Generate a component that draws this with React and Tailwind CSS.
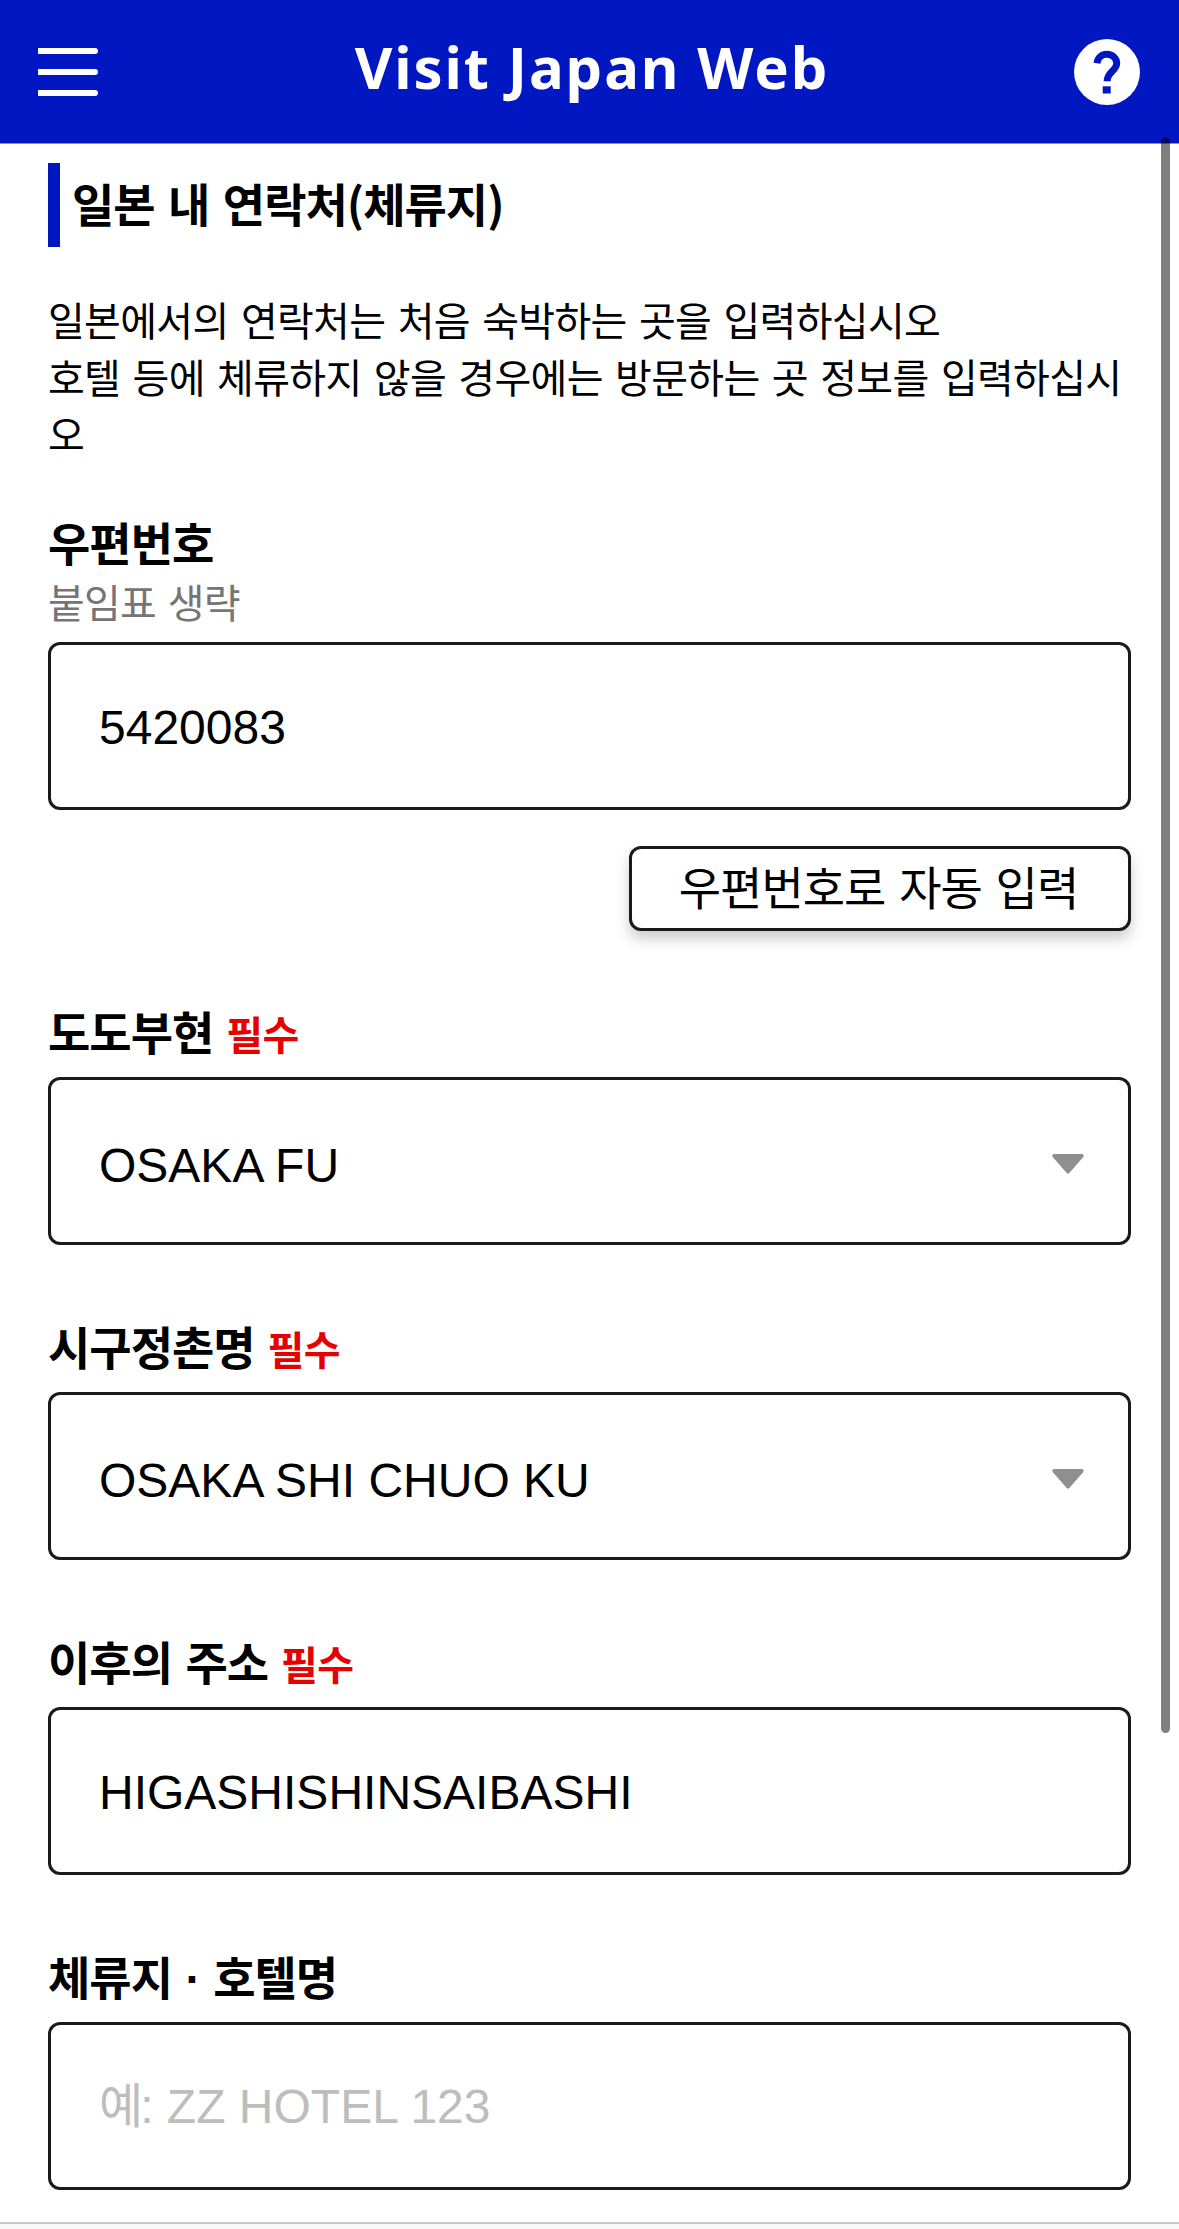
function HelpIcon() {
  return (
    <svg className="size-[66px]" viewBox="0 0 66 66" fill="none">
      <circle cx="33" cy="33" r="33" fill="#fff" />
      <path
        d="M23 24.2C23.8 18.6 27.8 15.3 33 15.3c5.500 0 9.700 4 9.700 9.200 0 7-9.600 8.300-9.600 17.800"
        stroke="#0017c1"
        strokeWidth="7"
      />
      <rect x="28.700" y="47.300" width="8" height="7.200" fill="#0017c1" />
    </svg>
  );
}

function Required() {
  return <span className="ml-[13px] text-[40px] tracking-[-0.7px] text-[#e60000]">필수</span>;
}

function Label({ children, required }) {
  return (
    <div className="flex h-[66px] items-baseline text-[46px] leading-[64px] font-bold tracking-[-1px] [word-spacing:4px]">
      <span>{children}</span>
      {required && <Required />}
    </div>
  );
}

function Box({ children }) {
  return (
    <div className="flex h-[168px] items-center justify-between rounded-[12px] border-[3px] border-[#1a1a1a] pt-[4px] pr-[44px] pl-[48px] font-['Liberation_Sans','Noto_Sans_CJK_KR',sans-serif] text-[48px] leading-[56px]">
      {children}
    </div>
  );
}

function SelectBox({ children }) {
  return (
    <Box>
      <span className="pt-[5px]">{children}</span>
      <svg className="mt-[2px] h-[20px] w-[32px]" viewBox="0 0 32 20" fill="#8f8f8f">
        <path d="M2.5 0h27c2.2 0 2.8 1.8 1.6 3.2L17.3 19c-.7.8-1.9.8-2.6 0L.9 3.2C-.3 1.8.3 0 2.5 0z" />
      </svg>
    </Box>
  );
}

export default function App() {
  return (
    <div className="relative flex h-[2229px] w-[1179px] flex-col overflow-hidden bg-white font-['Noto_Sans_CJK_KR',sans-serif] text-black">
      <header className="flex h-[144px] shrink-0 items-center justify-between border-b border-[#808be0] bg-[#0017c1] pr-[39px] pl-[38px]">
        <div className="flex w-[72px] flex-col gap-[15px]">
          <div className="h-[6px] w-[60px] rounded-r-full bg-white" />
          <div className="h-[6px] w-[60px] rounded-r-full bg-white" />
          <div className="h-[6px] w-[60px] rounded-r-full bg-white" />
        </div>
        <h1 className="pb-[9px] font-['Noto_Sans',sans-serif] text-[58px] leading-[80px] font-bold tracking-[1.9px] whitespace-nowrap text-white">
          Visit Japan Web
        </h1>
        <HelpIcon />
      </header>

      <main className="flex h-[2078px] shrink-0 flex-col px-[48px] pt-[19px]">
        <h2 className="flex h-[84px] shrink-0 items-center border-l-[12px] border-[#0017c1] pb-[6px] pl-[12px] text-[46px] leading-[78px] font-bold tracking-[-1px] [word-spacing:4px]">
          일본 내 연락처(체류지)
        </h2>
        <p className="mt-[44px] text-[40px] leading-[57px] tracking-[-0.68px] break-all [word-spacing:4px]">
          일본에서의 연락처는 처음 숙박하는 곳을 입력하십시오
          <br />
          호텔 등에 체류하지 않을 경우에는 방문하는 곳 정보를 입력하십시오
        </p>

        <section className="mt-[47px] flex flex-col">
          <Label>우편번호</Label>
          <div className="mb-[13px] h-[54px] text-[40px] leading-[52px] tracking-[-0.8px] text-[#757575] [word-spacing:3.5px]">붙임표 생략</div>
          <Box>5420083</Box>
          <button className="mt-[36px] flex h-[85px] w-[502px] items-start justify-center self-end rounded-[12px] border-[3px] border-[#1a1a1a] bg-white pr-[3px] text-[46px] leading-[73px] tracking-[-1px] whitespace-nowrap shadow-[0_8px_14px_rgba(0,0,0,0.2)] [word-spacing:4.5px]">
            우편번호로 자동 입력
          </button>
        </section>

        <section className="mt-[67px] flex flex-col gap-[67px]">
          <div>
            <Label required>도도부현</Label>
            <div className="mt-[13px]"><SelectBox>OSAKA FU</SelectBox></div>
          </div>
          <div className="mt-px">
            <Label required>시구정촌명</Label>
            <div className="mt-[13px]"><SelectBox>OSAKA SHI CHUO KU</SelectBox></div>
          </div>
          <div className="mt-px">
            <Label required>이후의 주소</Label>
            <div className="mt-[13px]"><Box>HIGASHISHINSAIBASHI</Box></div>
          </div>
          <div className="mt-px">
            <Label>체류지 <span className="font-['Liberation_Sans']">·</span> 호텔명</Label>
            <div className="mt-[13px]">
              <Box>
                <span className="pb-[2px] text-[#bdbdbd]"><span className="tracking-[-3px]">예</span>: ZZ HOTEL 123</span>
              </Box>
            </div>
          </div>
        </section>
      </main>
      <div className="flex-1 border-t-2 border-[#c8c8c8] bg-[#f9f9f9]" />

      <div className="absolute top-[137px] left-[1161px] h-[1596px] w-[9px] rounded-full bg-black/50" />
    </div>
  );
}
